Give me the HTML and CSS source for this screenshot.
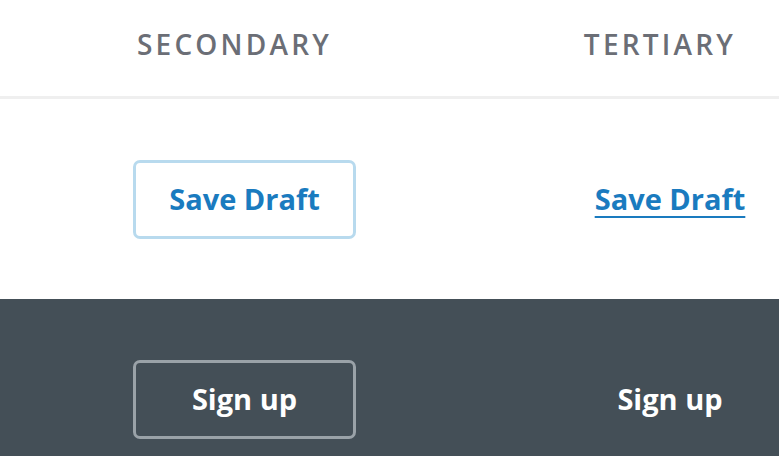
FILE: index.html
```html
<!DOCTYPE html>
<html lang="en">
<head>
<meta charset="utf-8">
<title>Buttons</title>
<link rel="stylesheet" href="styles.css">
</head>
<body>
<div class="table">
  <div class="row head">
    <div class="cell"><span class="label">SECONDARY</span></div>
    <div class="cell tert"><span class="label">TERTIARY</span></div>
  </div>
  <div class="row light">
    <div class="cell"><button class="btn btn-secondary">Save Draft</button></div>
    <div class="cell tert"><a class="link" href="#">Save Draft</a></div>
  </div>
  <div class="row dark">
    <div class="cell"><button class="btn btn-secondary-dark">Sign up</button></div>
    <div class="cell tert"><a class="link link-dark" href="#">Sign up</a></div>
  </div>
</div>
</body>
</html>
```
FILE: styles.css
```css
html, body {
  margin: 0;
  padding: 0;
  overflow: hidden;
  background: #fff;
  font-family: "Open Sans", Lato, sans-serif;
}
.row {
  display: grid;
  grid-template-columns: 489px 1fr;
}
.cell {
  display: flex;
  align-items: center;
  justify-content: center;
}
.cell.tert {
  padding-left: 72px;
}
.head {
  height: 96px;
  border-bottom: 3px solid #efefef;
}
.head .cell {
  padding-right: 20px;
}
.label {
  font-size: 28px;
  font-weight: 600;
  letter-spacing: 3.2px;
  color: #6b6e76;
  margin-top: -8px;
}
.light, .dark {
  height: 200px;
}
.dark {
  background: #444f57;
}
.btn {
  box-sizing: border-box;
  width: 223px;
  height: 79px;
  border-radius: 7px;
  background: transparent;
  font-family: inherit;
  font-size: 29px;
  font-weight: 700;
  padding: 0 0 2px;
  cursor: pointer;
}
.btn-secondary {
  border: 3px solid #b8daee;
  color: #1a7bbf;
  background: #fff;
}
.btn-secondary-dark {
  border: 3px solid #9aa2a8;
  color: #fff;
}
.link {
  font-size: 29px;
  font-weight: 700;
  color: #1a7bbf;
  text-decoration: underline;
  text-decoration-thickness: 2px;
  text-underline-offset: 6px;
  margin-top: -2px;
}
.link-dark {
  color: #fff;
  text-decoration: none;
}
```
